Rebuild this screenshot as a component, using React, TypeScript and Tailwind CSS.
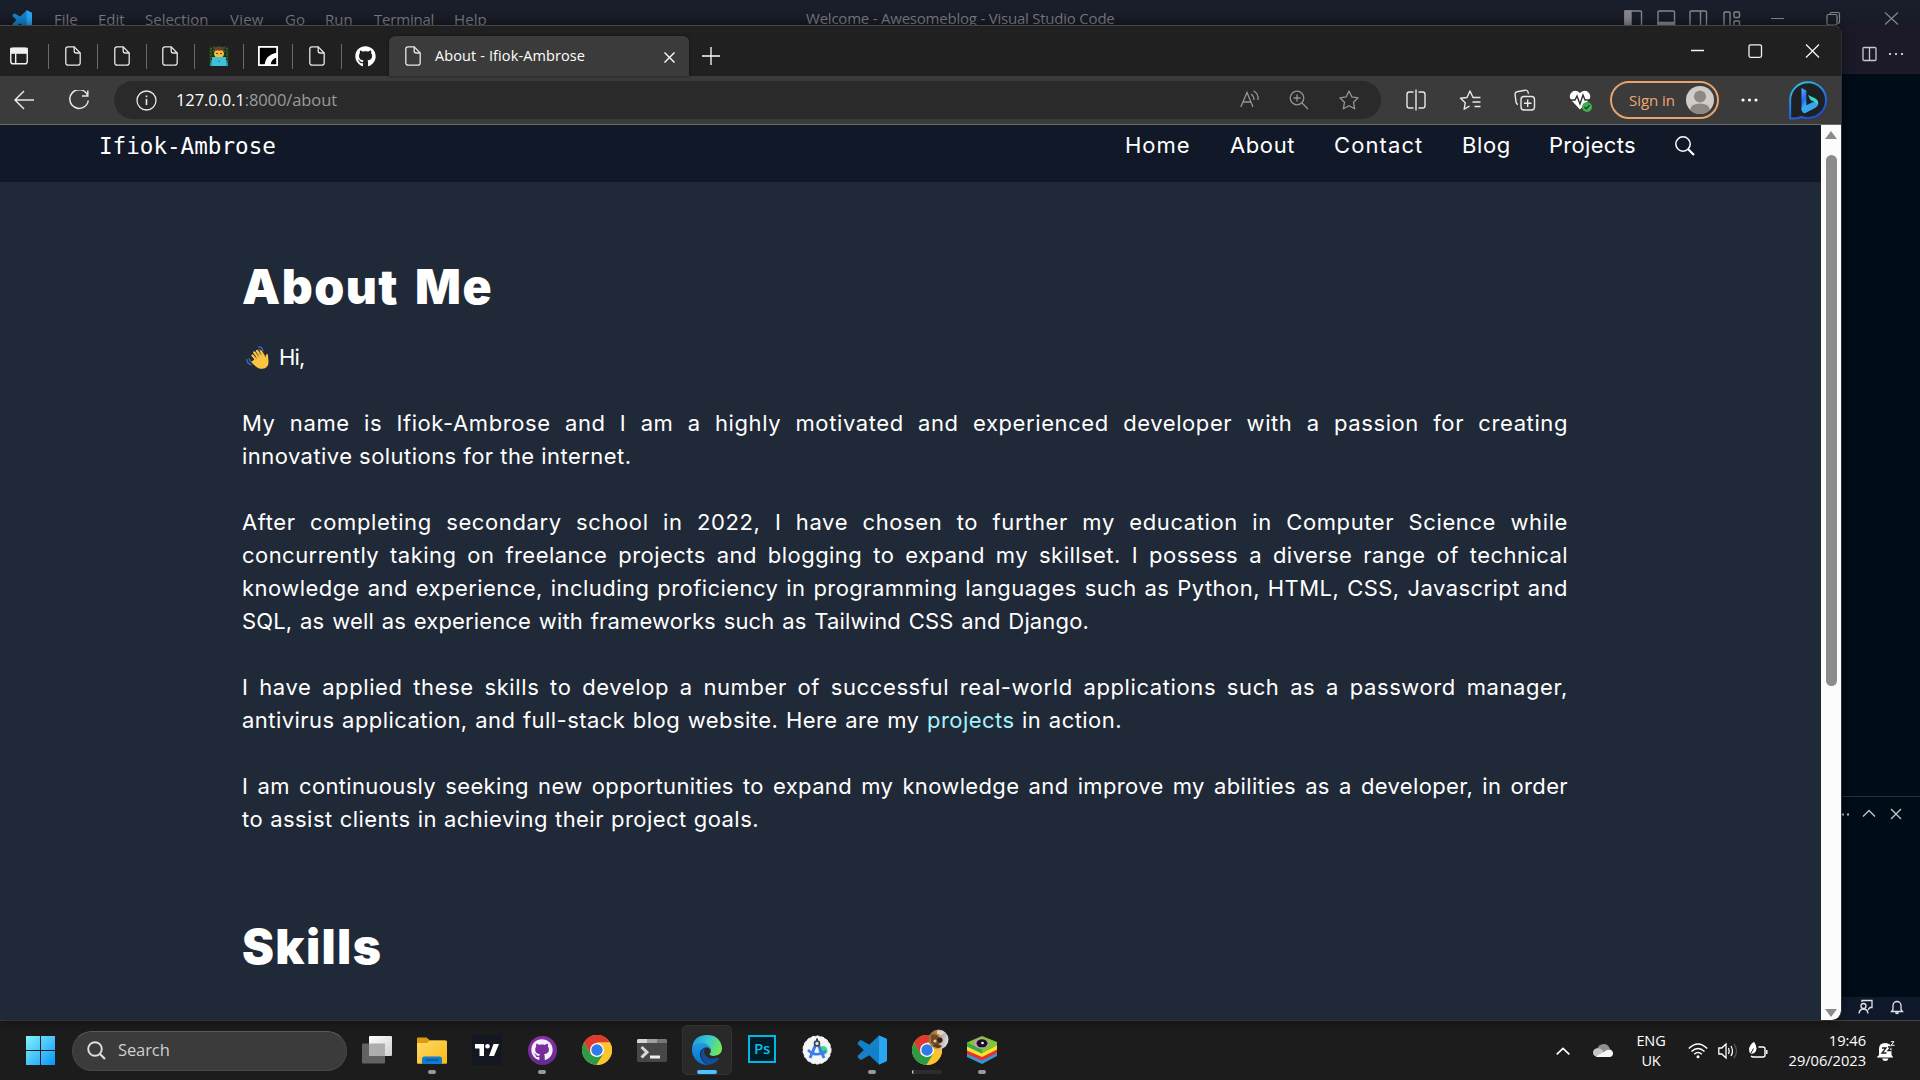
import type { ReactNode } from 'react';
import { FaGithub } from 'react-icons/fa';

const DocIcon = ({ className = '' }: { className?: string }) => (
  <svg className={`h-5 w-4 shrink-0 ${className}`} viewBox="0 0 16 20" fill="none" stroke="#e8e8e8" strokeWidth="1.3">
    <path d="M3 .8h6.2L15.2 7v10a2.2 2.2 0 0 1-2.2 2.2H3A2.2 2.2 0 0 1 .8 17V3A2.2 2.2 0 0 1 3 .8Z" />
    <path d="M9.2.8V5a2 2 0 0 0 2 2h4" />
  </svg>
);

const Sep = ({ className }: { className: string }) => <div className={`h-[25px] w-px shrink-0 bg-[#6b6b6b] ${className}`} />;

const VsCodeLogo = ({ className }: { className: string }) => (
  <svg className={`shrink-0 ${className}`} viewBox="0 0 30 30">
    <path d="M22 0.5 30 4v6L5 24.5 3.5 25 .6 22.2 1 20.5Z" fill="#1a7fc4" />
    <path d="M22 29.5 30 26v-6L5 5.5 3.5 5 .6 7.8 1 9.5Z" fill="#1180ca" />
    <path d="M22 .5 29 3.6q1 .5 1 1.6v19.6q0 1.100-1 1.600L22 29.500Z" fill="#2aa5f2" />
  </svg>
);

const ChromeLogo = () => (
  <svg className="h-[30px] w-[30px]" viewBox="0 0 30 30">
    <circle cx="15" cy="15" r="15" fill="#fbc02d" />
    <path d="M2 7.500A15 15 0 0 1 28 7.500H15L8.500 18.700Z" fill="#e0392d" />
    <path d="M2 7.500 8.500 18.700Q12 24 21.500 18.700L14.500 30A15 15 0 0 1 2 7.500Z" fill="#2c9a47" />
    <path d="M15 7.500H28A15 15 0 0 1 14.500 30L21.500 18.700Z" fill="#fcc42f" />
    <circle cx="15" cy="15" r="7" fill="#fff" />
    <circle cx="15" cy="15" r="5.700" fill="#2f7bea" />
  </svg>
);

const Dot = () => <span className="absolute top-[49px] left-1/2 h-1 w-2 -translate-x-1/2 rounded-full bg-[#9a9a9a]" />;

const TaskIcon = ({ className, children }: { className: string; children: ReactNode }) => (
  <div className={`relative flex h-full shrink-0 items-center justify-center pb-px ${className}`}>{children}</div>
);

const Line = ({ className = 'w-[1326px]', children }: { className?: string; children: ReactNode }) => (
  <span className={`block whitespace-nowrap text-justify [text-align-last:justify] ${className}`}>{children}</span>
);

function CodeWindow() {
  return (
    <div className="flex h-[1020px] w-full flex-col bg-[#000c18] text-[#77797f]">
      <div className="flex h-[25px] shrink-0 items-start bg-linear-to-b from-[#1a1f2d] to-[#181b25] pt-[8px] text-[15px] leading-[22px] whitespace-nowrap">
        <VsCodeLogo className="mt-[2px] ml-[12px] h-[20px] w-[20px]" />
        <span className="ml-[22px] w-[44px]">File</span>
        <span className="w-[47px]">Edit</span>
        <span className="w-[85px]">Selection</span>
        <span className="w-[55px] tracking-[0.2px]">View</span>
        <span className="w-[40px]">Go</span>
        <span className="w-[49px]">Run</span>
        <span className="w-[80px] tracking-[-0.2px]">Terminal</span>
        <span className="w-[352px] tracking-[0.1px]">Help</span>
        <span className="-mt-px w-[818px] tracking-[-0.22px]">Welcome - Awesomeblog - Visual Studio Code</span>
        <svg className="mt-[1px] h-5 w-[118px] shrink-0" viewBox="0 0 118 20" fill="none" stroke="#85868b" strokeWidth="1.400">
          <rect x="1" y="2" width="16.500" height="17" rx="1" /><path d="M1 2h6v17H1z" fill="#85868b" />
          <rect x="34" y="2" width="16.500" height="17" rx="1" /><path d="M34 13.500h16.500V19H34z" fill="#85868b" />
          <rect x="66" y="2" width="16.500" height="17" rx="1" /><path d="M76.500 2v17" />
          <rect x="100" y="3" width="6" height="16" rx="1" /><rect x="110" y="3" width="5.500" height="5.500" rx="1" /><rect x="110" y="12" width="5.500" height="7" rx="1" />
        </svg>
        <svg className="ml-[29px] h-5 w-[130px] shrink-0" viewBox="0 0 130 20" fill="none" stroke="#85868b" strokeWidth="1.200">
          <path d="M0 10.500h13M114 4.500l13 12M127 4.500l-13 12" />
          <rect x="56" y="6.500" width="10" height="10.500" rx="1.500" /><path d="M59 6.500V6q0-1.500 1.500-1.500h6.500q1.500 0 1.500 1.500v8q0 1-1.500 1.500" />
        </svg>
      </div>
      <div className="flex h-[49px] shrink-0 items-center justify-end bg-[#1c1a29] pr-[16px]">
        <svg className="mt-[9px] h-4 w-[42px]" viewBox="0 0 42 16" fill="none" stroke="#c8c8cc" strokeWidth="1.300">
          <rect x="1" y="1.500" width="13" height="13" rx="1" /><path d="M7.500 1.500v13" />
          <path d="M27 8h2M33 8h2M39 8h2" strokeWidth="2" />
        </svg>
      </div>
      <div className="h-[722px] shrink-0" />
      <div className="flex h-[201px] items-start justify-end border-t border-[#2b2b4a] pt-[9px] pr-[18px]">
        <svg className="h-4 w-[60px]" viewBox="0 0 60 16" fill="none" stroke="#c2c4c8" strokeWidth="1.400">
          <path d="M0 8.500h2M5 8.500h2" strokeWidth="2" /><path d="m21 10.500 6-6 6 6M49 3l10 10M59 3 49 13" />
        </svg>
      </div>
      <div className="flex h-[23px] shrink-0 items-start justify-end bg-[#10192c] pt-[2px] pr-[16px]">
        <svg className="h-4 w-[46px]" viewBox="0 0 46 16" fill="none" stroke="#e2e3e6" strokeWidth="1.300">
          <circle cx="5.500" cy="7" r="2.500" /><path d="M1 14.500q.5-4.500 4.500-4.500t4.500 4.500M4 3V1.500h10v7h-2l-2 2.200" />
          <path d="M33.500 12.500h11l-1.500-2V6.500a4 4 0 0 0-8 0v4ZM37.500 13.500q1.500 2 3 0" />
        </svg>
      </div>
    </div>
  );
}

function TabStrip() {
  return (
    <div className="flex h-[50px] shrink-0 items-center bg-[#202020] pt-[10px]">
      <div className="flex h-10 w-[389px] shrink-0 items-center">
        <svg className="ml-[10px] h-[18px] w-[18px] shrink-0" viewBox="0 0 19 18" fill="none" stroke="#f0f0f0" strokeWidth="1.500">
          <rect x=".8" y=".8" width="17.400" height="16.400" rx="2.500" /><path d="M1 1h17v5H1z" fill="#f0f0f0" /><path d="M6 6v11" />
        </svg>
        <Sep className="ml-[20px]" />
        <DocIcon className="ml-[16px]" />
        <Sep className="ml-[16px]" />
        <DocIcon className="ml-[16px]" />
        <Sep className="ml-[16px]" />
        <DocIcon className="ml-[15px]" />
        <Sep className="ml-[16px]" />
        <svg className="ml-[14px] h-5 w-5 shrink-0" viewBox="0 0 20 20">
          <rect width="20" height="19" rx="1" fill="#20301c" />
          <path d="M2 2v16M5 1v6M15 1v6M18 2v16" stroke="#4c9a35" strokeDasharray="1.500 1.500" />
          <circle cx="10" cy="7.500" r="5" fill="#f5bd3b" /><path d="M4.500 7.500Q4 .5 10 .5t5.500 7l-2-3h-7Z" fill="#68402d" />
          <path d="M7 7.500h2M11 7.500h2" stroke="#5b371f" strokeWidth="1.200" />
          <path d="M1 20q0-6 4-7h10q4 1 4 7Z" fill="#2e9fb8" /><rect x="3" y="11" width="14" height="9" rx="1" fill="#3dc3d8" /><circle cx="10" cy="15.500" r="1" fill="#2a9cb4" />
        </svg>
        <Sep className="ml-[14px]" />
        <svg className="ml-[14px] h-5 w-5 shrink-0" viewBox="0 0 20 20">
          <rect x=".9" y=".9" width="18.200" height="18.200" stroke="#fff" strokeWidth="1.800" />
          <path d="M6.500 19Q7 9 19 6.500v5q-6 1.500-6.500 7.500Z" fill="#fff" />
        </svg>
        <Sep className="ml-[14px]" />
        <DocIcon className="ml-[16px]" />
        <Sep className="ml-[16px]" />
        <FaGithub className="ml-[13px] h-[21px] w-[21px] shrink-0 text-white" />
      </div>
      <div className="relative flex h-10 w-[300px] shrink-0 items-center rounded-t-[6px] bg-[#3b3b3b] text-white shadow-[0_0_3px_#111]">
        <DocIcon className="ml-[16px]" />
        <span className="ml-[14px] w-[229px] text-[14.500px] tracking-[0.11px] whitespace-nowrap">About - Ifiok-Ambrose</span>
        <svg className="mt-[2px] h-[11px] w-[11px] shrink-0" viewBox="0 0 11 11" stroke="#fff" strokeWidth="1.400"><path d="m.5.5 10 10M10.500.5l-10 10" /></svg>
      </div>
      <svg className="ml-[13px] h-[18px] w-[18px] shrink-0" viewBox="0 0 18 18" stroke="#fff" strokeWidth="1.300"><path d="M9 0v18M0 9h18" /></svg>
      <svg className="mb-[11px] ml-[971px] h-[14px] w-[130px] shrink-0" viewBox="0 0 130 14" fill="none" stroke="#f4f4f4" strokeWidth="1.300">
        <path d="M0 6.500h13M115 .5l13 13M128 .5l-13 13" /><rect x="58" y=".8" width="12.500" height="12.500" rx="1.500" />
      </svg>
    </div>
  );
}

function Toolbar() {
  return (
    <div className="flex h-[49px] shrink-0 items-center border-b border-[#6a6a6a] bg-[#3b3b3b] text-[#e8e8e8]">
      <svg className="mb-[1px] ml-[14px] h-5 w-5 shrink-0" viewBox="0 0 20 20" fill="none" stroke="currentColor" strokeWidth="1.500"><path d="M20 10H1M10 1 1 10l9 9" /></svg>
      <svg className="ml-[34px] h-[21px] w-[22px] shrink-0" viewBox="0 0 22 21" fill="none" stroke="currentColor" strokeWidth="1.500"><path d="M19.500 5A9.300 9.300 0 1 0 20.300 10.500M19.800.5V6H14" /></svg>
      <div className="ml-[24px] flex h-[38px] w-[1267px] shrink-0 items-center rounded-full bg-[#2a2a2a]">
        <svg className="ml-[22px] h-[21px] w-[21px] shrink-0" viewBox="0 0 21 21" fill="none" stroke="currentColor" strokeWidth="1.300"><circle cx="10.500" cy="10.500" r="9.500" /><path d="M10.500 9v6M10.500 5.500v1.700" strokeWidth="1.600" /></svg>
        <span className="ml-[19px] w-[1064px] text-[16.500px] tracking-[-0.1px] whitespace-nowrap text-[#9a9a9a]"><span className="text-white">127.0.0.1</span>:8000/about</span>
        <svg className="h-5 w-[120px] shrink-0" viewBox="0 0 120 20" fill="none" stroke="#949494" strokeWidth="1.300">
          <path d="M.8 17 7 2.500 13 17M3 12h8M11 4q3 2 3 6M13.500.8Q19 4 18 10" />
          <circle cx="57" cy="8" r="6.800" /><path d="m62 13 6 6M57 4.500v7M53.500 8h7" />
          <path d="m109 1 2.800 5.900 6.400.9-4.700 4.500 1.200 6.500-5.700-3.100-5.700 3.100 1.200-6.500-4.700-4.500 6.400-.9Z" strokeLinejoin="round" />
        </svg>
      </div>
      <svg className="ml-[25px] h-6 w-[190px] shrink-0" viewBox="0 0 190 24" fill="none" stroke="currentColor" strokeWidth="1.400">
        <path d="M7.500 4H3.200Q1 4 1 6.200v11.600Q1 20 3.200 20h4.300M12.500 4h4.300Q19 4 19 6.200v11.600q0 2.200-2.200 2.200h-4.300M10 1.500v21" />
        <path d="M71 9.500h-4L64 3l-3 6.500-6.500.8 4.800 4.400-1.200 6.500 5.400-3M68.500 9.500h6M66.500 14h8M68.500 18.500h6" strokeLinejoin="round" />
        <rect x="115" y="8.500" width="13.500" height="13.500" rx="3" /><path d="M121.700 11.500v7.500M118 15.200h7.500M112 16.500q-1.500-.4-1.900-2.200l-1-7.500q-.3-2.500 2-3l8-1.600q2.500-.3 3 2l.4 1.500" />
        <path d="M174 21.500 166 13q-4-4.200-1-8 4-4.500 9 0 5-4.500 9 0 3 3.800-1 8Z" fill="#fff" stroke="none" />
        <path d="M163 12h6l2-4 3 8 3-9 2 5h5" stroke="#303030" />
        <circle cx="181" cy="19" r="5" fill="#3faf50" stroke="none" /><path d="m178.500 19 1.800 1.800 3.200-3.500" stroke="#124b1d" />
      </svg>
      <div className="ml-[14px] flex h-[38px] w-[109px] shrink-0 items-center rounded-full border-2 border-[#e8a26b]">
        <span className="ml-[17px] w-[57px] text-[15px] tracking-[-0.05px] whitespace-nowrap text-[#f0a872]">Sign in</span>
        <svg className="h-7 w-7 shrink-0" viewBox="0 0 28 28"><circle cx="14" cy="14" r="14" fill="#cfcdca" /><circle cx="14" cy="10.500" r="6" fill="#8d8884" /><path d="M4 24q1-6.500 10-6.500T24 24q-4 4-10 4T4 24Z" fill="#8d8884" /></svg>
      </div>
      <svg className="ml-[22px] h-1 w-[17px] shrink-0" viewBox="0 0 17 4" fill="#fff"><circle cx="2" cy="2" r="1.600" /><circle cx="8.500" cy="2" r="1.600" /><circle cx="15" cy="2" r="1.600" /></svg>
      <svg className="ml-[31px] h-[39px] w-[38px] shrink-0" viewBox="0 0 38 39">
        <defs>
          <linearGradient id="ring" x1="0" y1="0" x2="0.500" y2="1"><stop stopColor="#2cd0e0" /><stop offset=".6" stopColor="#2378e8" /><stop offset="1" stopColor="#1b50dc" /></linearGradient>
          <linearGradient id="bing" x1="0" y1="0" x2=".3" y2="1"><stop stopColor="#55b5ff" /><stop offset=".6" stopColor="#2369ee" /><stop offset="1" stopColor="#39bdf3" /></linearGradient>
        </defs>
        <path d="M1.200 37.500V19A17.900 17.900 0 1 1 19 37q-3.500 0-6.500-1-5 2-11.300 1.500Z" fill="#1e2022" stroke="url(#ring)" strokeWidth="2" />
        <path d="m12.500 7 4.800 2.500v16.800l-4.800 3.200Z" fill="url(#bing)" />
        <path d="m12.500 27 5.500-3 5-2.500 6-1q1 4-3 6.500l-9.500 5Q12.500 33 12.500 27Z" fill="#37a7f1" />
        <path d="m19 14 7.500 3.500q3.500 2 2.500 6.500-1-2-3.500-3l-4-2Z" fill="#35d6ca" />
      </svg>
    </div>
  );
}

function Page() {
  return (
    <div className="flex h-[895px] shrink-0">
      <div className="w-[1821px] shrink-0 bg-[#202937] font-['Inter',sans-serif] text-white">
        <header className="flex h-[57px] items-start bg-[#111827] pt-[4px] text-[22px] leading-[33px] whitespace-nowrap">
          <span className="mt-px ml-[99px] w-[1026px] shrink-0 font-['DejaVu_Sans_Mono',monospace] text-[22.600px]">Ifiok-Ambrose</span>
          <span className="w-[105px] shrink-0 tracking-[1px]">Home</span>
          <span className="w-[104px] shrink-0 tracking-[0.6px]">About</span>
          <span className="w-[128px] shrink-0 tracking-[1.1px]">Contact</span>
          <span className="w-[87px] shrink-0 tracking-[0.6px]">Blog</span>
          <span className="w-[126px] shrink-0 tracking-[0.3px]">Projects</span>
          <svg className="mt-[7px] h-5 w-5 shrink-0" viewBox="0 0 20 20" fill="none" stroke="#fff"><circle cx="8" cy="8" r="7.200" strokeWidth="1.500" /><path d="m13 13 6 6" strokeWidth="2.200" /></svg>
        </header>
        <main className="ml-[242px] w-[1326px] pt-[69px] text-[22px] leading-[33px] tracking-[0.45px]">
          <h1 className="text-[48px] leading-[72px] font-black tracking-[1.5px] [word-spacing:5px]">About Me</h1>
          <p className="mt-[18px] flex items-center tracking-[-0.8px] whitespace-nowrap">
            <svg className="ml-[4px] h-6 w-[23px]" viewBox="0 0 23 24" fill="none">
              <path d="M.8 13q0 5 5 6M3.300 12.500q0 3 3 4M12 1q4-1 5 4M12 3.500q2 0 3 2" stroke="#4472b8" strokeWidth="1.200" />
              <path d="m10.500 14-4-4.500M12.500 12 8.300 6.500M15 10.500 11 5M17.500 9.500 15 5.500" stroke="#fbc440" strokeWidth="2.300" strokeLinecap="round" />
              <path d="M6.800 14.800 10 12l4.500-4 4 1.500q1 .8 1.200 2l.3-3q1.500-1.500 2 .8l.5 6q.3 4-2 6-3.500 2.500-8 1-4-2.500-6.500-5.500-1-1.500.8-2Z" fill="#fbc440" />
              <path d="m8.500 10.500 2.700 2.800M10.800 8.300l2.500 2.900M13.200 6.800l2 2.500" stroke="#c98a22" strokeWidth=".7" />
            </svg>
            <span className="ml-[10px]">Hi,</span>
          </p>
          <p className="mt-[33px]">
            <Line className="w-[1326px] tracking-[0.6px]">My name is Ifiok-Ambrose and I am a highly motivated and experienced developer with a passion for creating</Line>
            <Line className="w-[389px]">innovative solutions for the internet.</Line>
          </p>
          <p className="mt-[33px]">
            <Line className="w-[1326px] tracking-[0.6px]">After completing secondary school in 2022, I have chosen to further my education in Computer Science while</Line>
            <Line>concurrently taking on freelance projects and blogging to expand my skillset. I possess a diverse range of technical</Line>
            <Line>knowledge and experience, including proficiency in programming languages such as Python, HTML, CSS, Javascript and</Line>
            <Line className="w-[847px] tracking-[0.15px]">SQL, as well as experience with frameworks such as Tailwind CSS and Django.</Line>
          </p>
          <p className="mt-[33px]">
            <Line className="w-[1326px] tracking-[0.6px]">I have applied these skills to develop a number of successful real-world applications such as a password manager,</Line>
            <Line className="w-[880px]">antivirus application, and full-stack blog website. Here are my <a className="text-[#a5f3fc]">projects</a> in action.</Line>
          </p>
          <p className="mt-[33px]">
            <Line className="w-[1326px] tracking-[0.35px]">I am continuously seeking new opportunities to expand my knowledge and improve my abilities as a developer, in order</Line>
            <Line className="w-[517px]">to assist clients in achieving their project goals.</Line>
          </p>
          <h1 className="mt-[75px] text-[48px] leading-[72px] font-black tracking-[1.4px]">Skills</h1>
        </main>
      </div>
      <div className="flex w-[20px] shrink-0 flex-col items-center rounded-br-[9px] bg-[#fcfcfc]">
        <svg className="mt-[6px] h-2 w-3" viewBox="0 0 12 8"><path d="M6 0 12 8H0Z" fill="#8b8b8b" /></svg>
        <div className="mt-[16px] h-[531px] w-[11px] rounded-full bg-[#8b8b8b]" />
        <svg className="mt-[323px] h-2 w-3" viewBox="0 0 12 8"><path d="M0 0H12L6 8Z" fill="#8b8b8b" /></svg>
      </div>
    </div>
  );
}

function Taskbar() {
  return (
    <div className="flex h-[60px] items-center border-t border-[#434343] bg-[#1c1c1c] text-white">
      <svg className="ml-[26px] h-[29px] w-[29px] shrink-0" viewBox="0 0 29 29">
        <defs><linearGradient id="win" x1="0" y1="0" x2="29" y2="29" gradientUnits="userSpaceOnUse"><stop stopColor="#7ff3fb" /><stop offset=".5" stopColor="#48c5f9" /><stop offset="1" stopColor="#0794fa" /></linearGradient></defs>
        <path d="M0 0h14v14H0zM15 0h14v14H15zM0 15h14v14H0zM15 15h14v14H15z" fill="url(#win)" />
      </svg>
      <div className="ml-[17px] flex h-10 w-[275px] shrink-0 items-center rounded-full border border-[#484848] border-t-[#5c5c5c] bg-[#3b3b3b]">
        <svg className="ml-[14px] h-[19px] w-[19px]" viewBox="0 0 19 19" fill="none" stroke="#dedede" strokeWidth="1.900"><circle cx="8" cy="8" r="6.800" /><path d="m13 13 5 5" strokeWidth="2.200" /></svg>
        <span className="ml-[12px] text-[16.500px] tracking-[-0.1px] text-[#cfcfcf]">Search</span>
      </div>
      <TaskIcon className="ml-[15px] w-[30px]">
        <svg className="h-[28px] w-[30px]" viewBox="0 0 30 28">
          <defs><linearGradient id="tv" x1="0" y1="0" x2="1" y2="1"><stop stopColor="#fff" /><stop offset="1" stopColor="#d0d0d0" /></linearGradient></defs>
          <rect y="7.500" width="23" height="20" rx="1" fill="#626262" /><rect x="7" width="23" height="20" rx="1" fill="url(#tv)" /><path d="M7 7.500h16V20H7z" fill="#aeaeae" />
        </svg>
      </TaskIcon>
      <TaskIcon className="ml-[25px] w-[30px]">
        <svg className="h-[27px] w-[30px]" viewBox="0 0 30 27">
          <defs><linearGradient id="folder" x1="0" y1="0" x2="1" y2="1"><stop stopColor="#ffda68" /><stop offset="1" stopColor="#fbb914" /></linearGradient></defs>
          <path d="M0 1.500Q0 .5 1 .5h8.500l3.500 3H28v5H0Z" fill="#dc9b08" /><path d="M0 6h10l3-2.500h16q1 0 1 1V26q0 .8-1 .8H1q-1 0-1-1Z" fill="url(#folder)" />
          <path d="M5 27v-5q0-2.500 2.500-2.500h15Q25 19.500 25 22v5Z" fill="#117bd0" /><path d="M8.500 23h13" stroke="#0a529c" strokeWidth="1.500" />
        </svg><Dot />
      </TaskIcon>
      <TaskIcon className="ml-[25px] w-[30px]">
        <svg className="h-[30px] w-[30px]" viewBox="0 0 30 30"><path d="M0 0h30v30H0z" fill="#131722" /><path d="M3 9h9v12H7.500v-7.500H3ZM21.500 9H27l-5 12h-5Z" fill="#fff" /><circle cx="15.500" cy="11.300" r="2.300" fill="#fff" /></svg>
      </TaskIcon>
      <TaskIcon className="ml-[25px] w-[30px]">
        <span className="flex h-[29px] w-[29px] items-center justify-center rounded-full bg-linear-to-b from-[#8b30a5] to-[#65298e]"><FaGithub className="h-[22px] w-[22px] text-[#f4effa]" /></span><Dot />
      </TaskIcon>
      <TaskIcon className="ml-[25px] w-[30px]"><ChromeLogo /></TaskIcon>
      <TaskIcon className="ml-[25px] w-[30px]">
        <svg className="h-[23px] w-[30px]" viewBox="0 0 30 23"><rect width="30" height="23" rx="1.500" fill="#474747" /><path d="M1.500 0H10v4H0V1.500Q0 0 1.500 0Z" fill="#d6d6d6" /><path d="M10 0h10v4H10z" fill="#9f9f9f" /><path d="M20 0h8.500Q30 0 30 1.500V4H20Z" fill="#777" /><path d="m4.500 8 5.500 5.200L4.500 18.500" fill="none" stroke="#d8d8d8" strokeWidth="3" /><path d="M13 16.500h10v3H13z" fill="#eee" /></svg>
      </TaskIcon>
      <TaskIcon className="ml-[15px] w-[50px]">
        <span className="absolute top-[4px] h-[50px] w-[50px] rounded-[5px] border border-[#323232] bg-[#292929]" />
        <svg className="relative h-[30px] w-[30px]" viewBox="0 0 30 30">
          <defs>
            <linearGradient id="e1" x1="0" y1=".2" x2="1" y2=".5"><stop stopColor="#2099dc" /><stop offset=".5" stopColor="#38c8d5" /><stop offset="1" stopColor="#70ea55" /></linearGradient>
            <linearGradient id="e2" x1="0" y1="0" x2="0" y2="1"><stop stopColor="#209be5" /><stop offset="1" stopColor="#0870cf" /></linearGradient>
          </defs>
          <path d="M0 14Q1 0 15 0q13 0 15 12.500.5 8-8.500 8.500-4.500-.5-4-2 2-2 1-5Q16 8 9 8.500 2 9 0 14Z" fill="url(#e1)" />
          <path d="M0 14Q3 6.500 11 8q7 1.500 7.500 7-2-3.500-5.500-2.500-7.500 3-4 11 3 6 8 6.300Q9 31 3 24-.5 19 0 14Z" fill="url(#e2)" />
          <path d="M13 12.500Q8 16 9.500 22q3 7.500 8.500 7.500 5.500-.8 9.500-6.500-2-.3-2.500.1-6 1.900-10-1.100-4.500-4-2-9.500Z" fill="#124f9b" />
        </svg>
        <span className="absolute top-[49px] h-1 w-5 rounded-full bg-[#4cc2ff]" />
      </TaskIcon>
      <TaskIcon className="ml-[15px] w-[30px]"><span className="mb-[3px] flex h-[28px] w-[28px] items-center justify-center border-2 border-[#00b8e8] bg-[#001d26] text-[15px] leading-none font-semibold tracking-[-0.3px] text-[#10bcec]">Ps</span></TaskIcon>
      <TaskIcon className="ml-[25px] w-[30px]">
        <svg className="h-[30px] w-[30px]" viewBox="0 0 30 30" fill="none"><circle cx="15" cy="15" r="14" fill="#f4f5f6" strokeDasharray="3 2" stroke="#fff" /><circle cx="21" cy="15.500" r="4.500" fill="#3bdc87" /><path d="m14 9-6 14M16 9l6 14" stroke="#3d7ced" strokeWidth="3" /><path d="M6 15q8 8 18 1" stroke="#3d7ced" strokeWidth="2.500" /><circle cx="15" cy="8.500" r="2.500" fill="#dce1e4" stroke="#354650" strokeWidth="1.600" /><path d="M15 3.500v3" stroke="#354650" strokeWidth="2" /></svg>
      </TaskIcon>
      <TaskIcon className="ml-[25px] w-[30px]"><VsCodeLogo className="h-[30px] w-[30px]" /><Dot /></TaskIcon>
      <TaskIcon className="ml-[25px] w-[30px]">
        <ChromeLogo />
        <svg className="absolute top-[8px] left-[16px] h-[21px] w-[21px]" viewBox="0 0 21 21">
          <defs><linearGradient id="photo" x1="0" y1="0" x2="1" y2=".3"><stop stopColor="#8a6236" /><stop offset=".5" stopColor="#b4885a" /><stop offset="1" stopColor="#d5dbde" /></linearGradient></defs>
          <circle cx="10.500" cy="10.500" r="10" fill="url(#photo)" />
          <path d="M9 1.500q5-1 8 2l-4 3-4-2Z" fill="#d9d3c6" />
          <path d="M3 6q5-2 8 2l2 5-4 4-6-3Z" fill="#714a1e" />
          <circle cx="12" cy="11" r="2.600" fill="#2b2230" /><path d="M4 16q5-2 10 1-4 5-10-1Z" fill="#5d3a18" /><circle cx="7" cy="12" r="1.600" fill="#e5c9a0" />
        </svg>
        <span className="absolute top-[49px] h-1 w-[30px] rounded-sm border-l border-white bg-[#2d2d2d]" />
      </TaskIcon>
      <TaskIcon className="ml-[25px] w-[30px]">
        <svg className="h-[28px] w-[30px]" viewBox="0 0 30 28"><path d="m0 17.500 30-1v3.500l-15 8L0 21Z" fill="#3497d4" /><path d="m0 14 30-1v4l-15 7.500L0 18Z" fill="#e82f2d" /><path d="m0 10 30-1v4.500L15 21 0 14.500Z" fill="#fee12e" /><path d="m0 6.500 15-6.500 15 6v3.500L15 17.500 0 10.500Z" fill="#7fc638" /><path d="m0 6.500 15 7v4L0 10.500Z" fill="#39a949" /><ellipse cx="14.500" cy="7.500" rx="7.500" ry="5" fill="#dc91ba" /><ellipse cx="15" cy="7.300" rx="5.500" ry="4" fill="#131421" /><circle cx="15.500" cy="7" r="1.300" fill="#fff" /></svg><Dot />
      </TaskIcon>
      <svg className="ml-[559px] h-2 w-[14px] shrink-0" viewBox="0 0 14 8" fill="none" stroke="#fff" strokeWidth="1.700"><path d="m.7 7.300 6.300-6 6.300 6" /></svg>
      <svg className="ml-[23px] h-[13px] w-5 shrink-0" viewBox="0 0 20 13"><path d="M4 6Q5 0 11 0q4 0 6 5l-5 3Z" fill="#8f8f8f" /><path d="M3.500 12.500Q0 12 0 8.500 0 5 4 4.200q4-.4 6 3l4 5Z" fill="#c6c6c6" /><path d="M3 12.500 14 6q5-2 6 3 0 4-3.500 4h-13Z" fill="#f7f7f7" /></svg>
      <div className="ml-[18px] w-[40px] shrink-0 text-center text-[14.500px] leading-5 tracking-[-0.1px]">ENG<br />UK</div>
      <svg className="ml-[17px] h-[16px] w-5 shrink-0" viewBox="0 0 20 16" fill="none" stroke="#fff" strokeWidth="1.500"><path d="M.8 5.500Q10-3.500 19.200 5.500M3.500 8.500q6.500-6 13 0M6.200 11.200q3.800-3.400 7.600 0" /><circle cx="10" cy="13.700" r="1.500" fill="#fff" stroke="none" /></svg>
      <svg className="ml-[10px] h-[18px] w-5 shrink-0" viewBox="0 0 20 18" fill="none" stroke="#fff" strokeWidth="1.300"><path d="M.8 6h3L8 2v14l-4.200-4h-3ZM10.500 6q1.500 3 0 6M13 4q3 5 0 10" /><path d="M16 2q5 7 0 14" stroke="#555" /></svg>
      <svg className="mb-[2px] ml-[10px] h-[18px] w-5 shrink-0" viewBox="0 0 20 18" fill="none" stroke="#fff" strokeWidth="1.400">
        <path d="M10.500 6H15q2 0 2 2v6q0 2-2 2H5.500Q4 16 3 15M18.800 9v4" />
        <path d="M2 12.500Q-1 6 6 .8q3.500 5 2 9-1.500 3.500-5.500 3Z" fill="#fff" stroke="none" /><path d="m1 15.500 4.500-8" stroke="#1c1c1c" strokeWidth="1" />
      </svg>
      <div className="mb-px ml-[18px] w-[80px] shrink-0 text-right text-[14.700px] leading-5 tracking-[-0.05px] whitespace-nowrap">19:46<br />29/06/2023</div>
      <svg className="ml-[11px] h-5 w-[18px] shrink-0" viewBox="0 0 18 20"><path d="M2 14V8q0-6 6-6 6.500 0 6.500 6v6l1.500 2v.5H0V16ZM5 17.500h6.500q-.8 2.500-3.200 2.500T5 17.500Z" fill="#fff" /><path d="M5 7h4l-4 5h4.500M11 6h3l-3 3.500h3.500" stroke="#1c1c1c" strokeWidth="1.300" fill="none" /><path d="M14 .7h3l-3 3.600h3.500" stroke="#fff" fill="none" /></svg>
    </div>
  );
}

export default function App() {
  return (
    <div className="relative h-[1080px] w-[1920px] overflow-hidden bg-[#1c1c1c] font-['Open_Sans',sans-serif]">
      <CodeWindow />
      <div className="absolute top-[25px] left-0 flex h-[995px] w-[1842px] flex-col overflow-hidden rounded-tr-[9px] rounded-br-[9px] border-t border-r border-t-[#454549] border-r-[#2d3039] shadow-[0_0_12px_#0008]">
        <TabStrip />
        <Toolbar />
        <Page />
      </div>
      <Taskbar />
    </div>
  );
}
